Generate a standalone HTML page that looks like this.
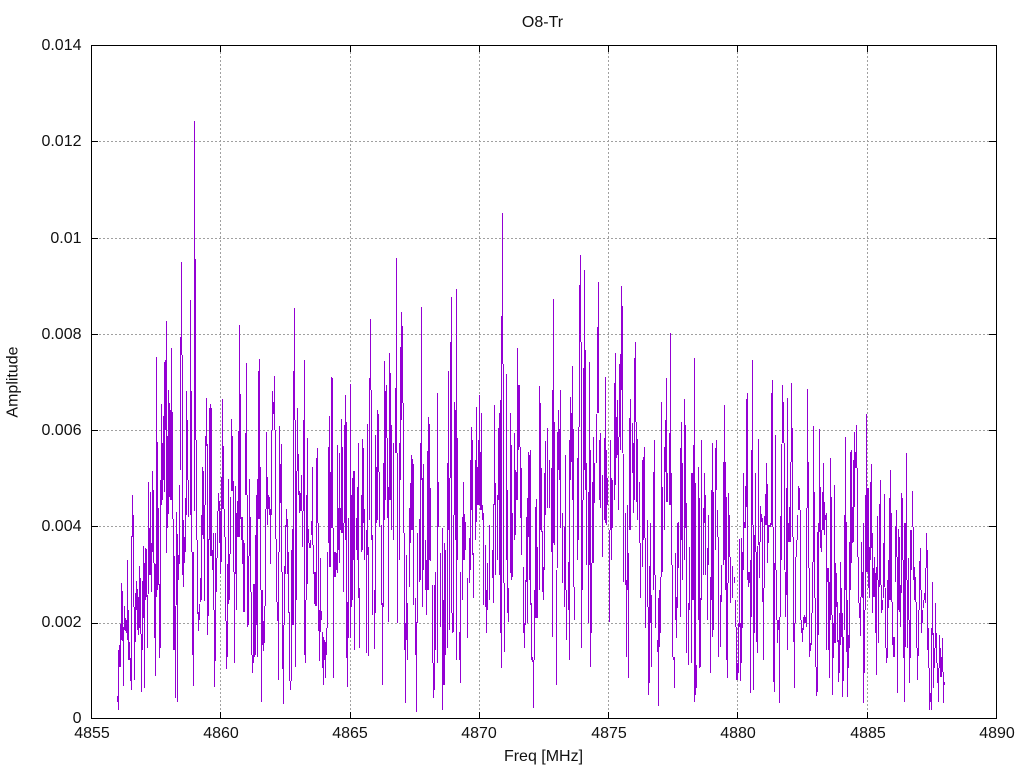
<!DOCTYPE html>
<html><head><meta charset="utf-8"><title>O8-Tr</title>
<style>html,body{margin:0;padding:0;background:#fff;width:1024px;height:768px;overflow:hidden}svg{display:block}text{font-family:"Liberation Sans",sans-serif;font-size:16px;fill:#111}</style></head>
<body>
<svg width="1024" height="768" viewBox="0 0 1024 768" xmlns="http://www.w3.org/2000/svg">
<rect width="1024" height="768" fill="#fff"/>
<g shape-rendering="crispEdges" fill="none">
<path stroke="#a0a0a0" stroke-dasharray="2 2" d="M99 141.5H989M99 238.5H989M99 334.5H989M99 430.5H989M99 526.5H989M99 623.5H989M220.5 52V712M350.5 52V712M479.5 52V712M608.5 52V712M737.5 52V712M867.5 52V712"/>
<path transform="translate(.5 0)" stroke="#9400d3" d="M117 696V702M118 650V710M119 645V667M120 624V667M121 583V640M122 591V641M123 627V686M124 606V630M125 618V631M126 620V633M127 560V640M128 610V660M129 642V660M130 658V681M131 536V690M132 495V537M133 515V607M134 607V680M135 593V642M136 581V610M137 589V630M138 597V635M139 566V628M140 578V634M141 634V692M142 581V650M143 546V618M144 563V688M145 548V600M146 549V597M147 595V648M148 482V594M149 528V575M150 492V575M151 543V592M152 471V552M153 490V563M154 563V638M155 564V676M156 357V597M157 442V590M158 508V585M159 584V658M160 480V648M161 404V505M162 443V500M163 416V480M164 362V492M165 360V430M166 321V553M167 436V528M168 390V514M169 403V497M170 410V500M171 348V500M172 412V519M173 519V650M174 556V650M175 606V698M176 512V605M177 534V702M178 555V580M179 485V564M180 337V470M181 262V355M182 355V575M183 520V587M184 537V563M185 498V552M186 391V515M187 420V480M188 480V517M190 300V515M191 391V552M192 552V655M193 552V686M194 121V511M195 259V440M196 440V540M197 540V614M198 612V631M199 604V620M200 578V602M201 515V600M202 467V535M203 471V539M204 505V601M205 436V505M206 398V446M207 444V635M208 539V616M209 408V540M210 404V556M211 408V556M212 550V570M213 533V610M214 610V687M215 533V661M216 558V592M217 511V558M218 493V511M219 501V543M220 511V574M221 477V562M222 399V509M223 446V509M224 509V537M225 537V621M226 621V669M227 564V657M228 479V604M229 554V600M230 497V554M231 419V491M232 436V491M233 481V572M234 572V663M235 486V574M236 513V610M237 501V537M238 431V537M239 325V537M240 394V519M241 517V540M242 517V564M243 540V612M244 543V612M245 433V495M246 363V495M247 495V627M248 556V625M249 479V556M250 517V592M251 592V655M252 655V673M253 584V663M254 584V657M255 535V655M256 495V625M257 479V657M258 371V519M259 359V519M260 467V590M261 590V702M262 590V645M263 621V651M264 606V643M265 509V606M266 432V509M267 477V525M268 495V509M269 497V515M270 509V564M271 430V515M272 391V430M273 402V414M274 376V430M275 430V539M276 539V602M277 602V621M278 552V680M279 426V552M280 464V503M281 444V572M282 572V669M283 625V704M284 566V625M285 525V574M286 509V527M287 519V574M288 552V613M289 612V681M290 681V690M291 550V681M292 529V625M293 371V625M294 308V420M295 420V667M296 471V600M297 408V471M298 454V495M299 491V513M300 493V511M301 475V511M302 511V547M303 420V511M304 360V655M305 600V663M306 495V600M307 438V584M308 529V543M309 543V548M310 540V548M311 521V535M312 467V545M313 545V574M314 572V604M315 572V606M316 458V606M317 448V523M318 523V631M319 610V661M320 558V632M321 611V620M322 632V668M323 637V685M324 640V660M325 642V678M326 628V655M327 552V628M328 447V543M329 416V567M330 472V567M331 377V528M332 378V528M333 528V678M334 552V577M335 552V577M336 553V570M337 445V573M338 508V550M339 453V563M340 508V530M341 419V533M342 447V533M343 523V592M344 425V523M345 395V540M346 422V658M347 602V687M348 518V638M350 384V638M351 495V607M352 478V600M353 471V560M354 471V650M356 518V550M357 487V560M358 443V598M359 588V648M361 495V552M362 439V550M363 448V523M364 509V560M366 530V653M367 424V555M368 547V656M369 378V520M370 319V390M371 390V540M372 535V615M374 590V649M375 435V613M376 467V523M377 410V520M378 414V472M379 472V527M381 525V605M382 603V685M383 463V607M384 361V520M385 391V500M386 385V438M387 438V518M388 487V622M389 353V500M390 373V500M391 425V530M393 443V540M395 388V453M396 258V453M397 453V623M399 443V560M400 347V480M401 312V420M402 326V403M403 403V533M404 533V650M405 623V703M406 555V640M407 603V660M409 508V587M410 483V543M411 455V530M412 459V530M413 464V605M415 598V655M416 622V712M417 533V623M419 519V582M420 443V580M421 307V480M422 478V607M423 464V570M425 540V590M426 560V615M427 451V590M428 417V590M429 424V560M430 488V561M432 585V663M433 663V698M434 585V690M435 572V650M437 393V663M438 482V527M440 553V627M442 528V710M443 600V685M444 543V685M445 550V655M447 463V648M448 371V530M449 478V630M450 342V478M451 297V613M452 613V633M453 515V632M454 402V515M455 410V540M456 289V660M457 438V560M459 632V660M460 572V683M462 517V600M463 482V560M464 514V560M465 522V550M467 578V638M469 538V583M470 460V570M471 427V510M472 440V555M473 553V598M475 460V540M476 407V522M477 467V505M478 440V505M479 395V505M480 452V510M481 413V510M482 505V520M483 513V605M485 545V607M486 590V633M487 563V610M489 525V600M492 550V578M493 504V603M494 405V505M495 483V575M497 495V560M498 428V500M499 413V575M500 400V633M501 316V668M502 213V364M503 364V583M504 583V652M506 374V560M507 490V613M508 588V622M510 413V573M511 445V580M512 513V577M514 433V540M515 470V535M516 472V500M517 348V500M518 385V450M519 385V447M520 447V518M521 468V555M523 567V633M524 623V648M525 580V625M526 517V582M527 498V623M528 452V537M529 455V580M530 450V605M531 603V660M532 657V662M533 660V708M534 590V660M535 507V618M536 499V618M537 547V618M539 386V590M540 403V530M541 468V532M542 531V592M543 567V600M544 473V570M545 441V515M547 428V508M549 460V508M551 468V552M552 390V637M553 299V543M554 422V545M556 570V685M557 432V568M558 410V470M559 429V480M560 390V528M562 513V583M564 527V607M565 455V590M566 590V640M568 562V610M569 440V660M570 397V480M571 413V462M572 366V500M573 429V587M574 587V620M577 458V560M578 427V540M579 285V427M580 255V342M581 342V648M582 500V590M583 368V500M584 270V470M585 350V490M586 463V565M588 492V623M589 362V565M590 450V667M591 563V633M592 482V563M593 437V563M594 463V503M596 414V463M597 327V413M598 282V413M599 440V500M600 433V508M602 475V557M604 438V520M605 377V523M606 450V525M607 478V505M609 530V622M610 440V530M611 478V560M612 480V528M614 383V500M615 353V485M616 417V458M617 400V455M618 437V510M619 364V437M620 354V450M621 286V390M622 306V453M623 454V582M625 513V585M626 580V657M627 505V590M628 553V678M629 418V530M630 399V530M632 423V473M633 443V513M634 358V500M635 342V422M636 422V502M637 439V520M639 482V543M640 543V598M642 460V567M643 457V540M644 447V538M645 538V628M647 520V607M648 607V695M649 566V683M650 523V623M651 595V667M653 472V590M654 440V575M655 575V628M657 640V652M658 598V706M659 590V647M660 577V633M661 402V577M662 487V572M664 447V530M665 420V472M666 378V502M667 473V502M669 433V505M670 333V505M671 473V565M672 565V657M673 657V660M674 657V688M675 553V620M676 597V638M677 523V608M678 522V568M680 448V617M681 422V540M682 463V580M684 399V560M685 425V528M686 503V653M688 603V665M689 547V610M691 473V663M692 473V600M693 445V600M694 358V702M695 483V695M696 665V688M698 467V620M699 498V668M700 598V667M701 440V600M703 508V575M704 473V523M705 495V575M707 548V620M708 515V565M710 577V673M711 490V600M712 443V637M713 492V630M715 448V550M716 440V490M717 510V537M718 537V657M720 595V647M721 565V602M723 462V565M724 405V560M725 462V590M726 497V660M727 583V678M728 493V583M729 515V557M730 557V603M732 566V598M734 577V583M735 600V627M736 627V680M737 663V680M738 623V673M739 539V627M740 623V681M741 538V663M742 552V628M743 473V570M744 522V528M745 486V528M746 399V507M747 393V580M748 572V587M749 572V583M750 560V693M751 450V617M752 360V525M753 525V690M754 535V633M755 473V552M756 552V642M757 546V653M758 439V545M759 542V578M760 506V542M761 514V522M762 518V602M763 588V660M764 516V588M765 494V525M766 463V525M767 484V563M768 525V543M769 525V527M770 523V527M771 393V525M772 380V527M773 527V682M774 563V692M775 435V570M776 570V620M777 620V643M778 620V630M779 617V703M780 516V617M781 444V560M782 385V443M783 402V443M784 443V570M785 572V617M786 488V595M787 398V650M788 523V542M789 507V542M790 462V542M791 383V462M792 428V537M793 537V642M794 623V688M795 557V623M796 540V557M797 515V540M798 486V510M799 488V510M800 510V620M801 620V633M802 628V642M803 617V630M804 615V623M805 617V623M806 508V627M807 389V508M808 462V568M809 568V657M810 643V651M811 613V645M812 562V613M813 426V562M814 492V598M815 598V667M816 667V696M817 532V692M818 523V635M819 429V532M820 487V548M821 530V552M822 492V530M823 463V530M824 502V535M825 515V520M826 513V650M827 568V582M828 568V650M829 582V678M830 458V620M831 497V615M832 615V695M833 623V658M834 485V643M835 563V643M836 573V607M837 602V642M838 640V682M839 613V673M840 562V645M841 588V637M842 613V697M843 637V681M844 515V630M845 437V590M846 522V652M847 600V697M848 635V668M849 542V648M850 452V590M851 450V563M852 507V543M853 460V542M854 432V507M855 452V468M856 425V468M857 468V557M858 557V603M859 603V618M860 597V636M861 542V597M862 572V598M863 523V703M864 610V673M865 495V610M866 414V572M867 488V572M868 488V588M869 547V598M870 482V560M871 464V548M872 533V613M873 568V597M874 557V597M875 573V633M876 567V675M877 516V580M878 580V643M879 504V587M880 480V585M881 585V613M882 600V610M883 543V598M884 494V587M885 588V648M886 648V663M887 580V658M888 560V608M889 498V600M890 470V600M891 513V602M892 602V645M893 637V657M894 637V657M895 526V582M896 510V557M897 557V693M898 529V610M899 537V612M900 585V627M901 493V593M902 498V560M903 560V658M904 523V702M905 523V647M906 453V580M907 580V648M908 558V620M909 620V683M910 530V658M911 530V570M912 491V527M913 527V580M914 567V600M915 577V602M916 602V648M917 648V680M918 610V656M919 561V610M920 548V590M921 590V633M922 610V623M923 600V608M924 593V600M925 568V603M926 533V568M927 550V650M928 628V668M929 668V710M930 693V702M931 628V710M932 582V635M933 633V688M934 648V668M935 603V648M936 633V663M937 663V683M938 668V702M939 635V668M940 648V677M941 657V677M942 638V672M943 672V703M944 682V685"/>
<path stroke="#000" d="M91.5 45.5H996.5V718.5H91.5ZM91 141.5H98M989 141.5H996M91 238.5H98M989 238.5H996M91 334.5H98M989 334.5H996M91 430.5H98M989 430.5H996M91 526.5H98M989 526.5H996M91 623.5H98M989 623.5H996M220.5 45V52M220.5 712V718M350.5 45V52M350.5 712V718M479.5 45V52M479.5 712V718M608.5 45V52M608.5 712V718M737.5 45V52M737.5 712V718M867.5 45V52M867.5 712V718"/>
</g>
<g text-anchor="end">
<text x="81.5" y="50">0.014</text>
<text x="81.5" y="146">0.012</text>
<text x="81.5" y="243">0.01</text>
<text x="81.5" y="339">0.008</text>
<text x="81.5" y="435">0.006</text>
<text x="81.5" y="531">0.004</text>
<text x="81.5" y="627">0.002</text>
<text x="81.5" y="723">0</text>
</g>
<g text-anchor="middle">
<text x="92" y="738">4855</text>
<text x="221" y="738">4860</text>
<text x="350" y="738">4865</text>
<text x="479" y="738">4870</text>
<text x="609" y="738">4875</text>
<text x="738" y="738">4880</text>
<text x="868" y="738">4885</text>
<text x="997" y="738">4890</text>
<text x="543.5" y="761">Freq [MHz]</text>
<text x="542.5" y="27">O8-Tr</text>
<text transform="translate(17.5 382) rotate(-90)">Amplitude</text>
</g>
</svg>
</body></html>
